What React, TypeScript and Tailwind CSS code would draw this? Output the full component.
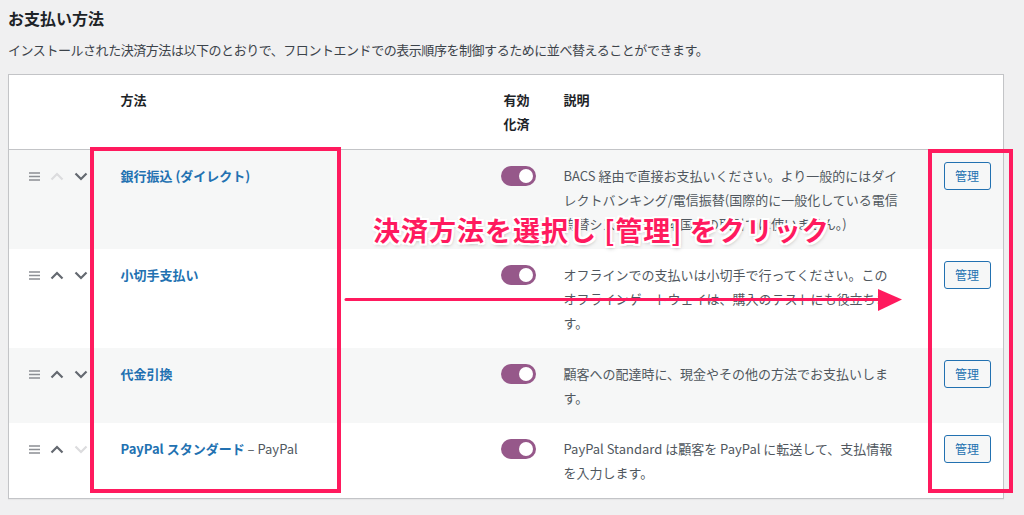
import React from 'react';

interface Method {
  name: string;
  suffix?: string;
  lines: string[];
  upOff?: boolean;
  downOff?: boolean;
}

const methods: Method[] = [
  {
    name: '銀行振込 (ダイレクト)',
    lines: [
      'BACS 経由で直接お支払いください。より一般的にはダイ',
      'レクトバンキング/電信振替(国際的に一般化している電信',
      '為替システム。日本国内の取引では使いません。)',
    ],
    upOff: true,
  },
  {
    name: '小切手支払い',
    lines: [
      'オフラインでの支払いは小切手で行ってください。この',
      'オフラインゲートウェイは、購入のテストにも役立ちま',
      'す。',
    ],
  },
  {
    name: '代金引換',
    lines: ['顧客への配達時に、現金やその他の方法でお支払いしま', 'す。'],
  },
  {
    name: 'PayPal スタンダード',
    suffix: ' – PayPal',
    lines: ['PayPal Standard は顧客を PayPal に転送して、支払情報', 'を入力します。'],
    downOff: true,
  },
];

const Handle = () => (
  <svg width="11" height="9" viewBox="0 0 11 9" className="block">
    <path d="M0 1h11M0 4.5h11M0 8h11" stroke="#8c8f94" strokeWidth="1.7" />
  </svg>
);

const Chevron = ({ up, off }: { up?: boolean; off?: boolean }) => (
  <svg width="14" height="9" viewBox="0 0 14 9" className="block">
    <path
      d={up ? 'M1.5 7.5L7 2l5.5 5.5' : 'M1.5 1.5L7 7l5.5-5.5'}
      fill="none"
      stroke={off ? '#dcdcde' : '#646970'}
      strokeWidth="2.2"
    />
  </svg>
);

const Toggle = () => (
  <div className="w-[35px] h-[20px] rounded-full bg-[#96588a] flex items-center justify-end pr-[3px]">
    <div className="w-[14px] h-[14px] rounded-full bg-white" />
  </div>
);

export default function App() {
  return (
    <div className="relative min-h-[515px] bg-[#f0f0f1] px-2 pt-[6px] text-[#3c434a] font-['Noto_Sans_CJK_JP',sans-serif]">
      <h2 className="text-[16px] leading-[24px] font-bold text-[#1d2327]">お支払い方法</h2>
      <p className="mt-[10px] text-[13px] leading-[20px] tracking-[-0.45px]">
        インストールされた決済方法は以下のとおりで、フロントエンドでの表示順序を制御するために並べ替えることができます。
      </p>

      <table className="mt-[14px] w-[995px] table-fixed border border-[#c3c4c7] bg-white text-[13px] leading-[24px] shadow-[0_1px_1px_rgba(0,0,0,0.04)]">
        <colgroup>
          <col className="w-[100px]" />
          <col className="w-[382px]" />
          <col className="w-[61px]" />
          <col className="w-[372px]" />
          <col className="w-[80px]" />
        </colgroup>
        <thead>
          <tr className="border-b border-[#c3c4c7] text-left font-bold text-[#1d2327]">
            <th className="pt-[13px] pb-[13px]" />
            <th className="pl-3 pt-[13px] pb-[13px] align-top font-bold">方法</th>
            <th className="pl-[13px] pt-[13px] pb-[13px] align-top font-bold">
              有効
              <br />
              化済
            </th>
            <th className="pl-3 pt-[13px] pb-[13px] align-top font-bold">説明</th>
            <th />
          </tr>
        </thead>
        <tbody>
          {methods.map((m, i) => (
            <tr key={i} className={i % 2 === 0 ? 'bg-[#f6f7f7]' : 'bg-white'}>
              <td className="pl-5 pt-[14px] pb-[13px] align-top">
                <div className="flex h-[24px] items-center gap-[10px]">
                  <Handle />
                  <Chevron up off={m.upOff} />
                  <Chevron off={m.downOff} />
                </div>
              </td>
              <td className="pl-3 pt-[14px] pb-[13px] align-top">
                <span className="font-bold text-[#2271b1]">{m.name}</span>
                {m.suffix && <span className="text-[#50575e]">{m.suffix}</span>}
              </td>
              <td className="pl-[10px] pt-[14px] pb-[13px] align-top">
                <div className="flex h-[24px] items-center">
                  <Toggle />
                </div>
              </td>
              <td className="pl-3 pt-[14px] pb-[13px] align-top whitespace-nowrap text-[#50575e]">
                {m.lines.map((l, j) => (
                  <div key={j}>{l}</div>
                ))}
              </td>
              <td className="pl-5 pt-[14px] pb-[13px] align-top">
                <div className="-mt-[2px] flex h-[28px] w-[47px] items-center justify-center rounded-[3px] border border-[#2271b1] bg-[#f6f7f7] text-[12px] text-[#2271b1]">
                  管理
                </div>
              </td>
            </tr>
          ))}
        </tbody>
      </table>

      {/* annotations */}
      <div className="absolute left-[90px] top-[147px] h-[346px] w-[251px] border-4 border-[#ff1a5e]" />
      <div className="absolute left-[928px] top-[149px] h-[344px] w-[85px] border-4 border-[#ff1a5e]" />
      <svg className="absolute left-[344px] top-[287px]" width="560" height="26" viewBox="0 0 560 26">
        <path d="M2 12.5H540" stroke="#ff1a5e" strokeWidth="3" strokeLinecap="round" />
        <path d="M534 2L558 12.5 534 24Z" fill="#ff1a5e" />
      </svg>
      <div className="absolute left-[373px] top-[213px] whitespace-nowrap text-[27px] leading-[34px] font-bold tracking-[1px] text-[#ff1a5e] [text-shadow:2px_0_0_#fff,-2px_0_0_#fff,0_2px_0_#fff,0_-2px_0_#fff,2px_2px_0_#fff,-2px_-2px_0_#fff,2px_-2px_0_#fff,-2px_2px_0_#fff,1px_2px_4px_rgba(0,0,0,0.35)]">
        決済方法を選択し [管理] をクリック
      </div>
    </div>
  );
}
